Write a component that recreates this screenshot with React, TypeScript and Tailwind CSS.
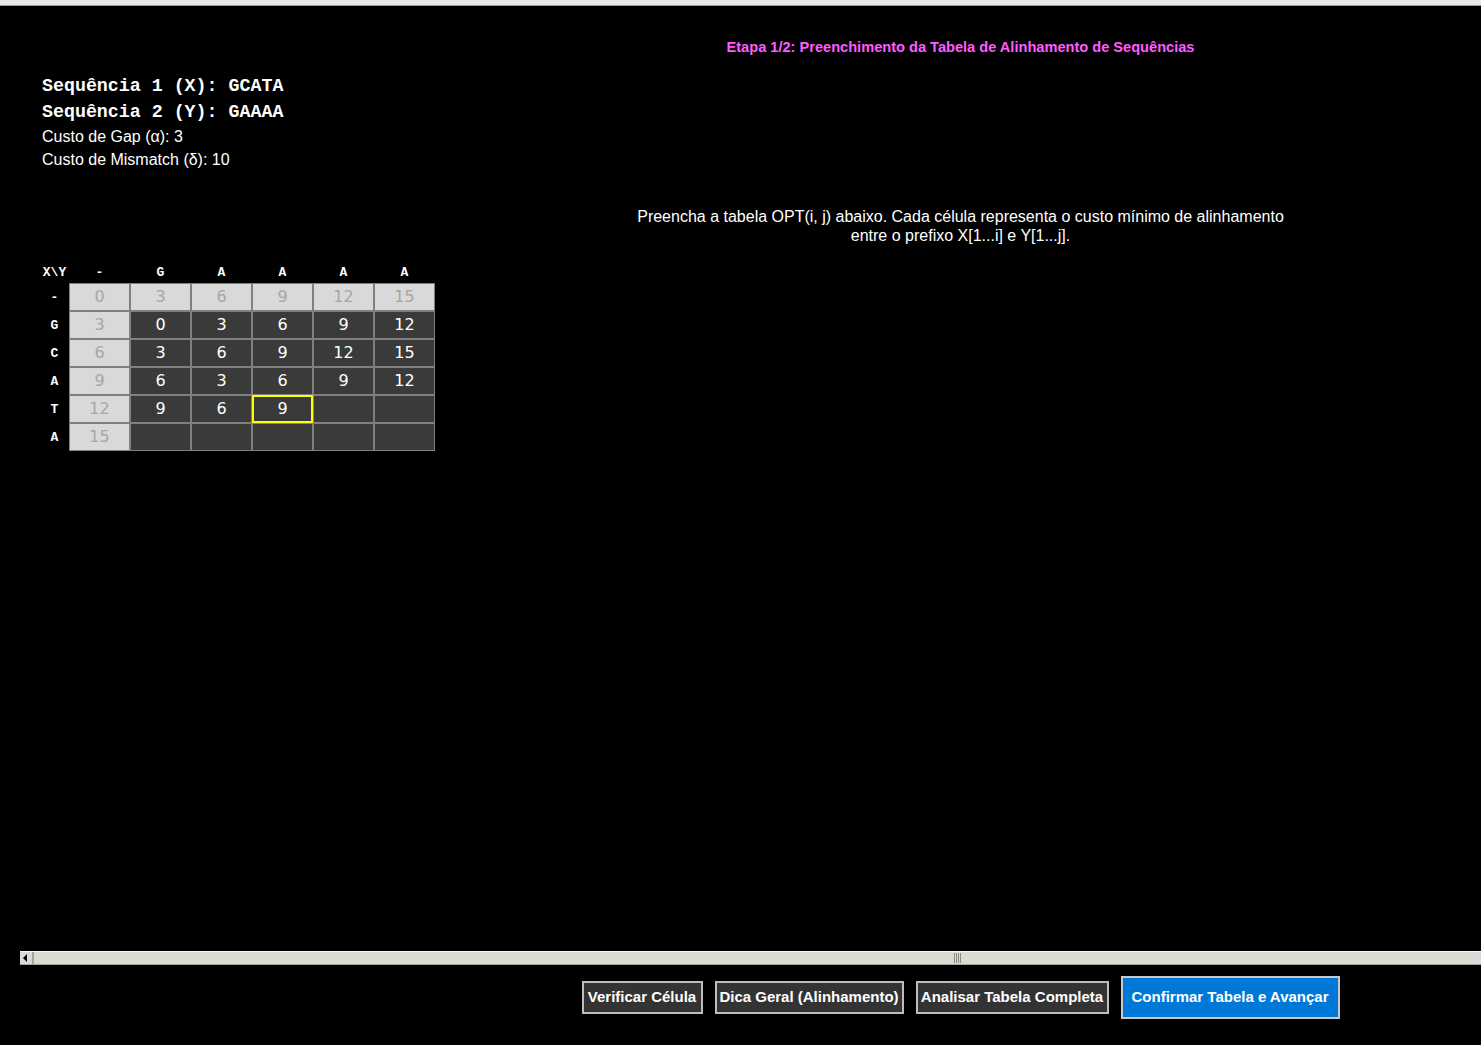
import React from "react"

const colHeaders = ["-", "G", "A", "A", "A", "A"]
const rowHeaders = ["-", "G", "C", "A", "T", "A"]

// null = empty cell still to fill
const table: (number | null)[][] = [
  [0, 3, 6, 9, 12, 15],
  [3, 0, 3, 6, 9, 12],
  [6, 3, 6, 9, 12, 15],
  [9, 6, 3, 6, 9, 12],
  [12, 9, 6, 9, null, null],
  [15, null, null, null, null, null],
]

const mono = { fontFamily: '"Liberation Mono", "Courier New", monospace' }
const sans = { fontFamily: '"Liberation Sans", Arial, sans-serif' }
const cellFont = { fontFamily: '"DejaVu Sans", Verdana, sans-serif' }

function Cell({ value, fixed, active }: { value: number | null; fixed: boolean; active: boolean }) {
  let cls = "flex h-[28px] w-[61px] items-center justify-center border text-[16px] "
  if (fixed) cls += "border-[#808080] bg-[#d9d9d9] text-[#a6a6a6]"
  else if (active) cls += "border-[#808080] bg-[#3a3a3a] text-white outline-2 -outline-offset-2 outline-[#ffff00]"
  else cls += "border-[#808080] bg-[#3a3a3a] text-white"
  return (
    <div className={cls} style={cellFont}>
      {value ?? ""}
    </div>
  )
}

function OptTable() {
  return (
    <div className="flex flex-col" style={mono}>
      {/* header row */}
      <div className="flex h-[18px] items-end pb-[1px] text-[13px] font-bold text-white">
        <div className="w-[29px] text-center">X\Y</div>
        {colHeaders.map((c, i) => (
          <div key={i} className="w-[61px] text-center">
            {c}
          </div>
        ))}
      </div>
      {table.map((row, i) => (
        <div key={i} className="flex items-center">
          <div className="w-[29px] pt-[1px] text-center text-[13px] font-bold text-white">{rowHeaders[i]}</div>
          {row.map((v, j) => (
            <Cell key={j} value={v} fixed={i === 0 || j === 0} active={i === 4 && j === 3} />
          ))}
        </div>
      ))}
    </div>
  )
}

function Button({ label, width, primary }: { label: string; width: string; primary?: boolean }) {
  return (
    <button
      className={
        primary
          ? `${width} h-[43px] border-2 border-[#c8c8c8] bg-[#0078d7] text-[15px] font-bold text-white`
          : `${width} h-[33px] border-2 border-[#bdbdbd] bg-[#333333] text-[15px] font-bold text-white`
      }
      style={sans}
    >
      {label}
    </button>
  )
}

export default function App() {
  return (
    <div className="h-[1045px] w-full overflow-hidden bg-black" style={sans}>
      {/* window top edge */}
      <div className="h-[6px] border-b border-[#9a9a9a] bg-[#e9e9e9]" />

      <div className="flex h-[945px]">
        {/* Left: data + table */}
        <div className="flex w-[440px] flex-col pl-[42px] pt-[67px]">
          <div className="text-[18.3px] font-bold leading-[26px] text-white" style={mono}>
            Sequência 1 (X): GCATA
          </div>
          <div className="text-[18.3px] font-bold leading-[26px] text-white" style={mono}>
            Sequência 2 (Y): GAAAA
          </div>
          <div className="text-[16px] leading-[23px] text-white">Custo de Gap (α): 3</div>
          <div className="text-[16px] leading-[23px] text-white">Custo de Mismatch (δ): 10</div>

          <div className="-ml-[2px] mt-[94px]">
            <OptTable />
          </div>
        </div>

        {/* Right: instructions */}
        <div className="flex flex-1 flex-col items-center pt-[31px]">
          <div className="text-[14.6px] font-bold leading-[20px] text-[#ff5cff]">
            Etapa 1/2: Preenchimento da Tabela de Alinhamento de Sequências
          </div>
          <div className="mt-[150px] text-center text-[16px] leading-[19px] text-white">
            Preencha a tabela OPT(i, j) abaixo. Cada célula representa o custo mínimo de alinhamento
            <br />
            entre o prefixo X[1...i] e Y[1...j].
          </div>
        </div>
      </div>

      {/* horizontal scrollbar */}
      <div className="ml-[20px] flex h-[14px] border-y border-t-[#f4f4f2] border-b-[#a5a39e] bg-[#dcdad5]">
        <div className="flex w-[14px] items-center justify-center border-r-2 border-[#a5a39e]">
          <svg width="6" height="8" viewBox="0 0 6 8">
            <path d="M4 0 L0 4 L4 8 Z" fill="#000" />
          </svg>
        </div>
        <div className="flex flex-1 items-center pl-[920px]">
          <div className="flex h-[10px] gap-[1px]">
            <div className="w-[1px] bg-[#8a8884]" />
            <div className="w-[1px] bg-[#8a8884]" />
            <div className="w-[1px] bg-[#8a8884]" />
            <div className="w-[1px] bg-[#8a8884]" />
          </div>
        </div>
      </div>

      {/* action buttons */}
      <div className="flex h-[64px]">
        <div className="w-[440px]" />
        <div className="flex flex-1 items-center justify-center gap-[12px]">
          <Button label="Verificar Célula" width="w-[121px]" />
          <Button label="Dica Geral (Alinhamento)" width="w-[189px]" />
          <Button label="Analisar Tabela Completa" width="w-[193px]" />
          <Button label="Confirmar Tabela e Avançar" width="w-[219px]" primary />
        </div>
      </div>
    </div>
  )
}
